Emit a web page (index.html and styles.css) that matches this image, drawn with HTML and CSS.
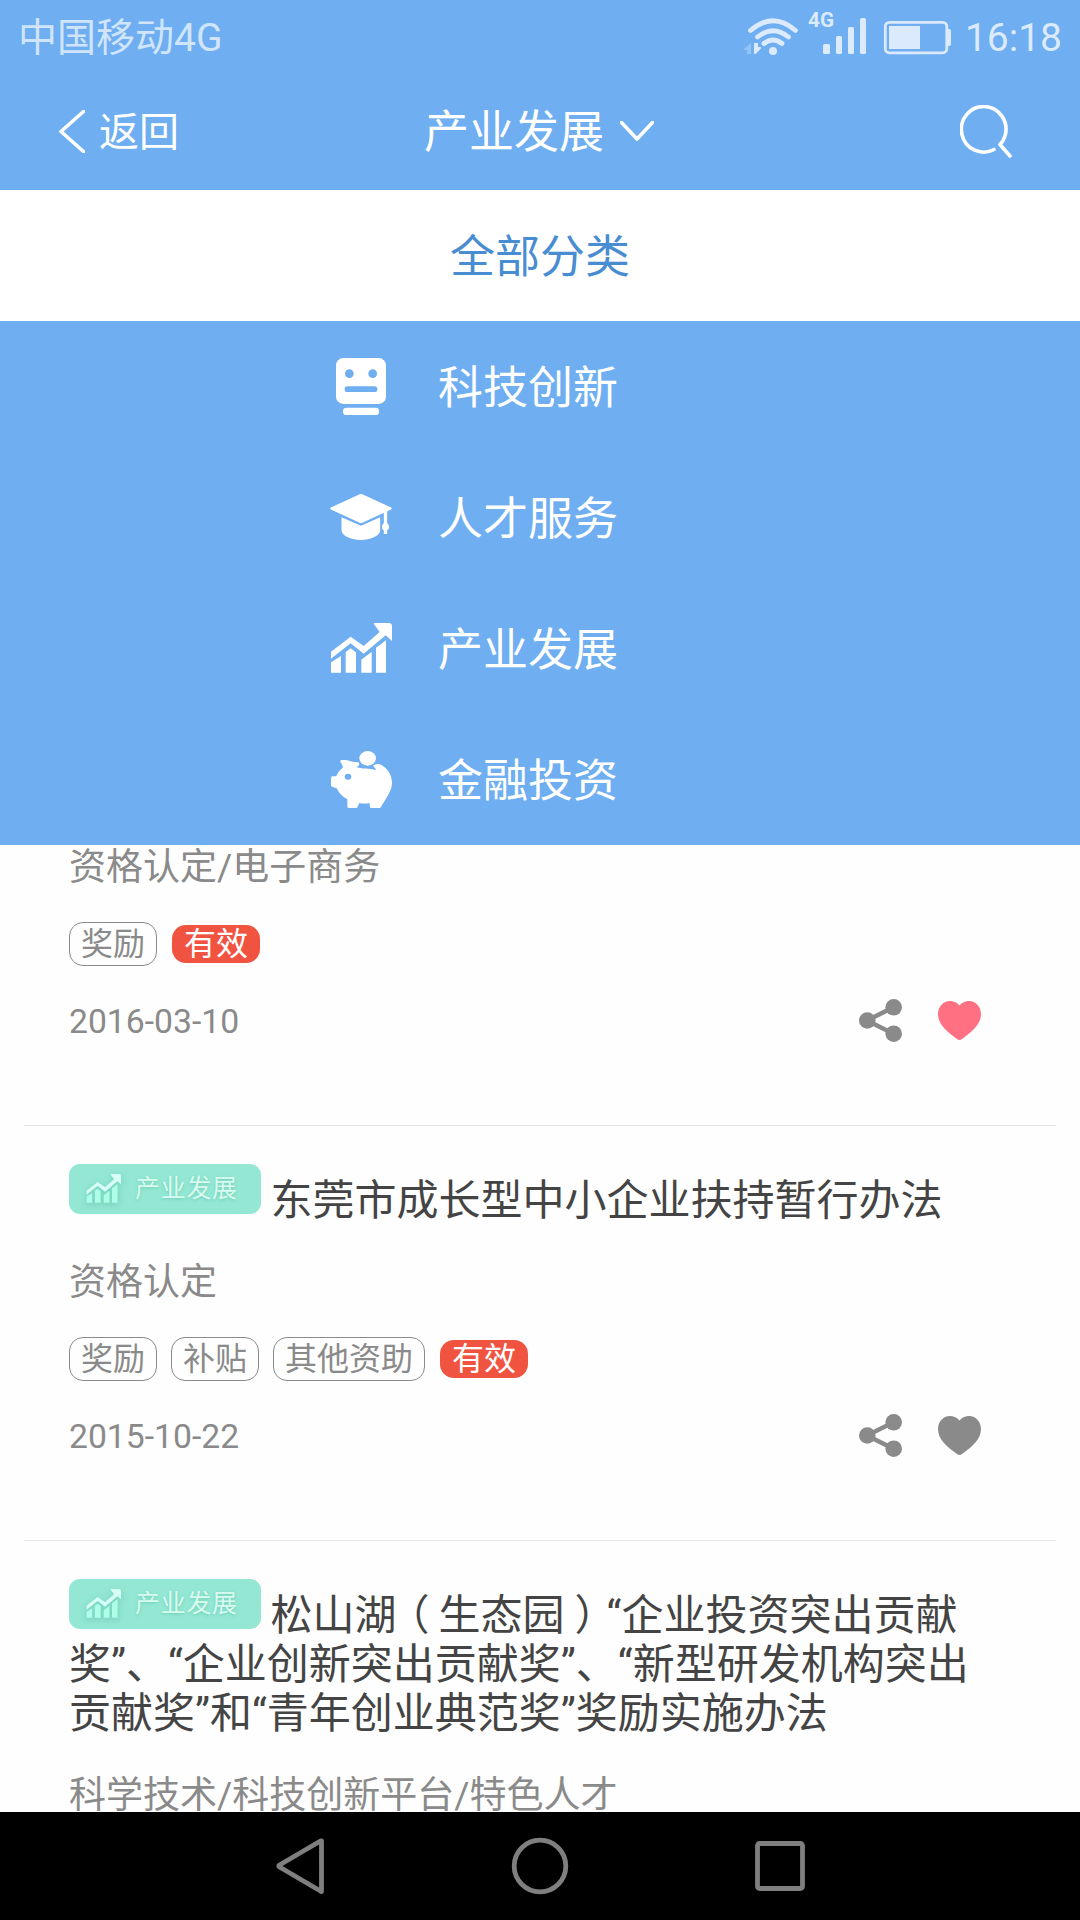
FILE: index.html
```html
<!DOCTYPE html>
<html lang="zh-CN">
<head>
<meta charset="utf-8">
<title>产业发展</title>
<link rel="stylesheet" href="styles.css">
</head>
<body>
<svg class="defs" width="0" height="0">
  <symbol id="chart" viewBox="0 0 186 150" preserveAspectRatio="none">
    <path d="M3 86 62 41 101 69 149 27 132 4V0H176Q186 0 186 10V54L167 37 101 92 62 61 3 107Z"/>
    <path class="bars" d="M3 149V118L33 99V149ZM47 149V87L62 76 78 88V149ZM94 149V110L125 86V149ZM138 149V74L168 52V149Z"/>
  </symbol>
  <symbol id="share" viewBox="0 0 43 43">
    <path d="M8 21.500 35 8M8 21.500 35 35" fill="none" stroke="currentColor" stroke-width="4.500"/>
    <circle cx="8.300" cy="21.500" r="8.300"/><circle cx="34.700" cy="8.300" r="8.300"/><circle cx="34.700" cy="34.700" r="8.300"/>
  </symbol>
  <symbol id="heart" viewBox="0 0 43 39">
    <path d="M21.500 4.500C24.500 1 28 0 31 0C38 0 43 6 43 13C43 23 35 30 24 38Q21.500 40 19 38C8 30 0 23 0 13C0 6 5 0 12 0C15 0 18.500 1 21.500 4.500Z"/>
  </symbol>
</svg>
<div class="screen">
  <header class="top">
    <div class="status">
      <span class="carrier">中国移动4G</span>
      <div class="status-right">
        <svg class="signals" viewBox="744 10 208 48" fill="currentColor">
          <g fill="none" stroke="currentColor" stroke-width="4.800" stroke-linecap="round">
            <path d="M750.500 30.500Q773 11 795.500 30.500M757.500 37Q773 24.500 788.500 37M764 43.500Q773 36.500 782 43.500"/>
          </g>
          <circle cx="773" cy="51" r="4"/>
          <path d="M744 49 751 43V54H747V50H744Z" opacity=".35"/>
          <path d="M754 43H758V47H761V48.500L755.500 54H754Z"/>
          <text class="net" x="808" y="27" textLength="26" lengthAdjust="spacingAndGlyphs">4G</text>
          <rect x="823" y="44" width="7" height="10" rx="1.500"/><rect x="836" y="36" width="6" height="18" rx="1.500"/><rect x="848" y="27" width="6" height="27" rx="1.500"/><rect x="860" y="18" width="6" height="36" rx="1.500"/>
          <rect x="885.300" y="22.300" width="61.500" height="30.500" rx="4" fill="none" stroke="currentColor" stroke-width="2.800"/>
          <rect x="889" y="26" width="31" height="23"/><path d="M947 29H949Q951 29 951 31V44Q951 46 949 46H947Z"/>
        </svg>
        <span class="clock">16:18</span>
      </div>
    </div>
    <nav class="bar">
      <div class="back">
        <svg width="26" height="43" viewBox="0 0 26 43"><path d="M24.500 1.500 2 21.500 24.500 41.500" class="line"/></svg>
        <span class="label">返回</span>
      </div>
      <div class="heading"><span class="label">产业发展</span>
        <svg width="34" height="21" viewBox="0 0 34 21"><path d="M1 1 17 18 33 1" class="line"/></svg>
      </div>
      <svg class="search" width="52" height="53" viewBox="0 0 52 53"><path d="M34 44.500A22.300 22.800 0 1 1 45 31Q43.500 36 40 39.500L50 51" class="line"/></svg>
    </nav>
  </header>
  <div class="all"><span class="label">全部分类</span></div>
  <ul class="menu">
    <li><svg width="62" height="57" viewBox="0 0 186 171"><rect x="18" width="150" height="138" rx="22"/><rect x="39" y="149" width="108" height="22" rx="10"/><g class="hole"><circle cx="58" cy="47" r="13"/><circle cx="128" cy="47" r="13"/><rect x="44" y="85" width="98" height="17" rx="8.500"/></g></svg><span class="label">科技创新</span></li>
    <li><svg width="62" height="46" viewBox="0 0 186 139"><path d="M2 41 89 1Q93-1 97 1L184 41Q188 44 184 47L97 87Q93 89 89 87L2 47Q-2 44 2 41Z"/><path d="M34 70 93 96 151 70V109C151 128 118 139 93 139C66 139 34 128 34 109ZM162 54 172 50V88Q178 92 178 100 178 107 172 110V121H162V110Q156 107 156 100 156 92 162 88Z"/></svg><span class="label">人才服务</span></li>
    <li><svg width="62" height="50"><use href="#chart"/></svg><span class="label">产业发展</span></li>
    <li><svg width="62" height="57" viewBox="0 0 186 171"><ellipse cx="113" cy="22" rx="25" ry="22"/><path d="M3 82C3 77 6 76 10 76H19C23 65 30 57 38 50C40 44 34 38 31 32C30 28 34 26 40 27C55 26 62 32 72 33Q82 32 88 35L87 43 80 49C98 55 118 51 135 57L138 55 129 44Q139 36 150 40C172 50 186 72 186 96C186 120 168 142 153 168Q151 171 147 171H124Q120 171 120 167L118 156Q103 159 88 156L83 167Q82 171 77 171H56Q52 171 52 166V145C36 136 28 127 20 112L8 108Q3 107 3 103Z"/><ellipse class="hole" cx="54" cy="77" rx="10" ry="9"/></svg><span class="label">金融投资</span></li>
  </ul>
  <main class="list">
    <article class="item">
      <p class="cat">资格认定/电子商务</p>
      <div class="tags"><span class="tag">奖励</span><span class="tag valid">有效</span></div>
      <div class="foot"><time>2016-03-10</time><div class="acts"><svg class="share"><use href="#share"/></svg><svg class="heart liked"><use href="#heart"/></svg></div></div>
    </article>
    <article class="item">
      <h2><span class="badge"><svg><use href="#chart"/></svg>产业发展</span>东莞市成长型中小企业扶持暂行办法</h2>
      <p class="cat">资格认定</p>
      <div class="tags"><span class="tag">奖励</span><span class="tag">补贴</span><span class="tag">其他资助</span><span class="tag valid">有效</span></div>
      <div class="foot"><time>2015-10-22</time><div class="acts"><svg class="share"><use href="#share"/></svg><svg class="heart"><use href="#heart"/></svg></div></div>
    </article>
    <article class="item">
      <h2><span class="badge"><svg><use href="#chart"/></svg>产业发展</span>松山湖<span class="open">（</span>生态园<span class="close">）</span>“企业投资突出贡献奖”、“企业创新突出贡献奖”、“新型研发机构突出贡献奖”和“青年创业典范奖”奖励实施办法</h2>
      <p class="cat">科学技术/科技创新平台/特色人才</p>
    </article>
  </main>
  <footer class="nav">
    <svg width="58" height="58" viewBox="0 0 58 58"><path d="M50.500 4V54Q50.500 55 49.500 54L8.500 30Q7 29 8.500 28L49.500 4Z"/></svg>
    <svg width="58" height="58" viewBox="0 0 58 58"><circle cx="29" cy="29" r="25.800"/></svg>
    <svg width="58" height="58" viewBox="0 0 58 58"><rect x="6.500" y="6.500" width="45" height="45" rx="2"/></svg>
  </footer>
</div>
</body>
</html>
```
FILE: styles.css
```css
* { box-sizing: border-box; margin: 0; padding: 0; }
body { font-family: Roboto, "Noto Sans CJK SC", sans-serif; font-weight: 400; background: #fff; }
.defs { display: block; height: 0; }
.screen { width: 1080px; height: 1920px; display: flex; flex-direction: column; overflow: hidden; background: #fefefe; }
svg { display: block; flex: none; fill: currentColor; }
.line { fill: none; stroke: #fff; stroke-width: 3.6; stroke-linecap: round; stroke-linejoin: round; }
.label { padding-bottom: 4px; }

.top { height: 190px; flex: none; background: #6eaef1; color: #fff; }
.status { height: 74px; padding: 0 18px; display: flex; justify-content: space-between; align-items: center; color: #dbeafc; }
.carrier { color: #d0e5fb; font-size: 39px; padding-bottom: 6px; }
.status-right { display: flex; align-items: center; gap: 13px; }
.signals { width: 208px; height: 48px; margin-top: -6px; overflow: visible; }
.net { font-size: 21px; font-weight: 700; }
.clock { font-size: 39px; padding-top: 1px; }
.bar { height: 116px; padding: 0 68px 2px 59px; display: grid; grid-template-columns: 1fr auto 1fr; align-items: center; }
.back { display: flex; align-items: center; gap: 14px; font-size: 40px; }
.heading { display: flex; align-items: center; gap: 16px; font-size: 45px; padding-left: 7px; }
.bar .label { padding-bottom: 5px; }
.search { justify-self: end; }

.all { height: 131px; flex: none; display: flex; align-items: center; justify-content: center; background: #fff; color: #488cd2; font-size: 45px; }
.menu { list-style: none; flex: none; background: #6eaef1; color: #fff; font-size: 45px; }
.menu li { height: 131px; padding: 0 0 1px 330px; display: flex; align-items: center; gap: 46px; }
.hole { fill: #6eaef1; }
.bars { fill: var(--bars, currentColor); }

.list { flex: 1; min-height: 0; overflow: hidden; padding: 0 24px; }
.item { padding: 50px 75px 0 45px; height: 415px; border-bottom: 1px solid #e6e6e6; }
.item:first-child { height: 281px; padding-top: 1px; }
h2 { font-size: 42px; line-height: 49px; font-weight: 400; color: #444; margin-bottom: 36px; }
.open { margin: 0 9px 0 -9px; }
.close { margin: 0 -10px 0 10px; }
.badge { --bars: #adffe8; display: inline-flex; align-items: center; gap: 14px; width: 192px; height: 50px; margin: -20px 9.500px -20px 0; padding-left: 17px; vertical-align: 12px; border-radius: 11px; background: #93e7d3; color: #d8fbf0; font-size: 25px; letter-spacing: .7px; line-height: 46px; text-shadow: 0 1px 3px #6fcdb6; }
.badge svg { width: 35px; height: 29px; color: #d8fff5; filter: drop-shadow(0 2px 3px #6fcdb6); }
.cat { font-size: 37px; line-height: 44px; color: #8a8a8a; }
.tags { height: 44px; margin-top: 32px; display: flex; align-items: center; gap: 14px; }
.tag { height: 44px; padding: 0 11px; display: flex; align-items: center; border: 1px solid #8a8a8a; border-radius: 14px; color: #8a8a8a; font-size: 32px; line-height: 32px; }
.valid { height: 38px; border: 0; padding: 0 12px; margin-left: 1px; background: #f15341; color: #fff; }
.foot { height: 44px; margin-top: 32px; display: flex; align-items: center; justify-content: space-between; color: #8a8a8a; font-size: 33.700px; }
.foot time { padding-top: 2px; }
.acts { display: flex; align-items: center; gap: 36px; }
.share { width: 43px; height: 43px; }
.heart { width: 43px; height: 39px; }
.liked { color: #ff7182; }

.nav { height: 108px; flex: none; padding: 0 271px; background: #000; display: flex; align-items: center; justify-content: space-between; }
.nav svg { fill: none; stroke: #7f7f7f; stroke-width: 4.800; stroke-linejoin: round; }
```
